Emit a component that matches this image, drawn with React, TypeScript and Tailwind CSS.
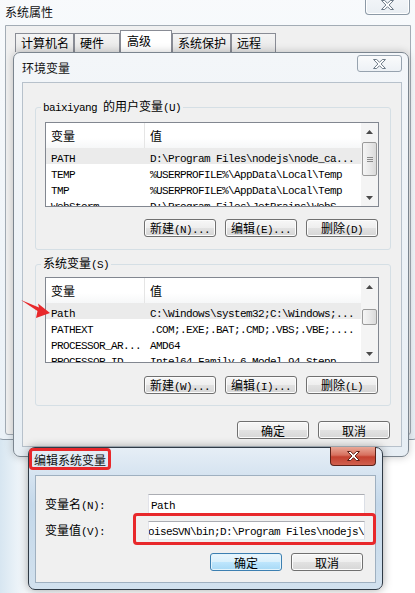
import React from "react";

const CJK = "font-['Noto_Sans_CJK_SC',sans-serif] text-[12px] leading-[16px]";

// SimSun-like mix: CJK runs 12px, ASCII runs monospace at 6px per char
function Mixed({ text }: { text: string }) {
  const parts = text.split(/([\u4e00-\u9fff]+)/).filter(Boolean);
  return (
    <span className="whitespace-pre leading-[16px] text-black">
      {parts.map((p, i) =>
        /[\u4e00-\u9fff]/.test(p) ? (
          <span key={i} className="font-['Noto_Sans_CJK_SC',sans-serif] text-[12px]">
            {p}
          </span>
        ) : (
          <span key={i} className="font-['Liberation_Mono',monospace] text-[11px] tracking-[-0.6px]">
            {p}
          </span>
        )
      )}
    </span>
  );
}

function Btn({ label, primary = false }: { label: string; primary?: boolean }) {
  return (
    <div
      className={
        primary
          ? "flex h-[18px] w-[72px] items-center justify-center overflow-hidden rounded-[3px] border border-[#3c7fb1] bg-[linear-gradient(#eaf6fd,#d9f0fc_50%,#bee6fd_50%,#a7d9f5)] shadow-[inset_0_0_0_1px_#e3f4fc]"
          : "flex h-[18px] w-[72px] items-center justify-center overflow-hidden rounded-[3px] border border-[#707070] bg-[linear-gradient(#f7f7f7,#eeeeee_50%,#e2e2e2_50%,#d6d6d6)] shadow-[inset_0_0_0_1px_#fcfcfc]"
      }
    >
      <Mixed text={label} />
    </div>
  );
}

function CloseX({ fill, stroke }: { fill: string; stroke: string }) {
  return (
    <svg width="13" height="10" viewBox="-0.5 -0.5 13 10">
      <path
        d="M0 0H3.2L6 2.8L8.8 0H12L7.6 4.5L12 9H8.8L6 6.2L3.2 9H0L4.4 4.5Z"
        fill={fill}
        stroke={stroke}
        strokeWidth="1"
        strokeLinejoin="round"
      />
    </svg>
  );
}

function GreyClose({ h }: { h: string }) {
  return (
    <div
      className={`flex ${h} w-[45px] items-end justify-center rounded-b-[4px] border border-t-0 border-[#8c99a6] bg-[linear-gradient(#f7f9fb,#e9eef3)] pb-[4px] shadow-[inset_0_0_0_1px_#ffffff]`}
    >
      <CloseX fill="#ffffff" stroke="#6f7c89" />
    </div>
  );
}

type Row = { name: string; value: string; sel?: boolean };

function Scrollbar({ thumb, grip }: { thumb: string; grip?: boolean }) {
  return (
    <div className="flex w-[17px] shrink-0 flex-col bg-[#f4f4f4]">
      <div className="flex h-[17px] shrink-0 items-center justify-center">
        <svg width="7" height="4" viewBox="0 0 7 4">
          <path d="M3.5 0L7 4H0Z" fill="#4a4a4a" />
        </svg>
      </div>
      <div className="flex-1 px-[1px]">
        <div
          className={`${thumb} flex flex-col items-center justify-center gap-[1px] rounded-[2px] border border-[#9a9a9a] bg-[linear-gradient(90deg,#f5f5f5,#e9e9e9_50%,#dadada)]`}
        >
          {grip && (
            <>
              <div className="h-px w-[6px] bg-[#8a8a8a]" />
              <div className="h-px w-[6px] bg-[#8a8a8a]" />
              <div className="h-px w-[6px] bg-[#8a8a8a]" />
            </>
          )}
        </div>
      </div>
      <div className="flex h-[17px] shrink-0 items-center justify-center">
        <svg width="7" height="4" viewBox="0 0 7 4">
          <path d="M0 0H7L3.5 4Z" fill="#4a4a4a" />
        </svg>
      </div>
    </div>
  );
}

function VarList({ rows, h, thumb, grip }: { rows: Row[]; h: string; thumb: string; grip?: boolean }) {
  return (
    <div className={`flex w-[334px] ${h} overflow-hidden border border-[#828790] bg-white`}>
      <div className="min-w-0 flex-1 overflow-hidden">
        <div className="flex h-[25px] bg-[linear-gradient(#ffffff,#ffffff_60%,#f6f7f8)]">
          <div className={`flex w-[99px] shrink-0 items-center border-r border-[#e5e5e5] pl-[5px] ${CJK}`}>变量</div>
          <div className={`flex items-center pl-[5px] ${CJK}`}>值</div>
        </div>
        {rows.map((r) => (
          <div
            key={r.name}
            className={`flex h-[16px] items-center overflow-hidden whitespace-nowrap ${r.sel ? "bg-[#ebebeb]" : ""}`}
          >
            <div className="w-[99px] shrink-0 pl-[5px]">
              <Mixed text={r.name} />
            </div>
            <div className="pl-[5px]">
              <Mixed text={r.value} />
            </div>
          </div>
        ))}
      </div>
      <Scrollbar thumb={thumb} grip={grip} />
    </div>
  );
}

function Group({ label, children, pad }: { label: string; children: React.ReactNode; pad: string }) {
  return (
    <div className={`relative w-[356px] rounded-[3px] border border-[#d5dfe5] pl-[9px] ${pad}`}>
      <div className="absolute left-[5px] top-[-10px] flex h-[16px] items-center bg-[#f0f0f0] px-[2px]">
        <Mixed text={label} />
      </div>
      {children}
    </div>
  );
}

const userRows: Row[] = [
  { name: "PATH", value: "D:\\Program Files\\nodejs\\node_ca...", sel: true },
  { name: "TEMP", value: "%USERPROFILE%\\AppData\\Local\\Temp" },
  { name: "TMP", value: "%USERPROFILE%\\AppData\\Local\\Temp" },
  { name: "WebStorm", value: "D:\\Program Files\\JetBrains\\WebS" },
];

const sysRows: Row[] = [
  { name: "Path", value: "C:\\Windows\\system32;C:\\Windows;...", sel: true },
  { name: "PATHEXT", value: ".COM;.EXE;.BAT;.CMD;.VBS;.VBE;...." },
  { name: "PROCESSOR_AR...", value: "AMD64" },
  { name: "PROCESSOR_ID", value: "Intel64 Family 6 Model 94 Stepp" },
];

const tabs = [
  { label: "计算机名", w: "w-[59px]", sel: false },
  { label: "硬件", w: "w-[46px]", sel: false },
  { label: "高级", w: "w-[52px]", sel: true },
  { label: "系统保护", w: "w-[59px]", sel: false },
  { label: "远程", w: "w-[45px]", sel: false },
];

export default function App() {
  return (
    <div className="relative h-[593px] w-[415px] overflow-hidden bg-[linear-gradient(90deg,#d7e6f1,#f4f8fb_6%,#ffffff_30%)]">
      {/* 系统属性 */}
      <div className="absolute left-[-4px] top-[-12px] h-[452px] w-[424px] rounded-b-[7px] border border-[#8f9ba7] bg-[linear-gradient(#f8fafc,#eaf1f7)]">
        <div className="flex h-[36px] items-start justify-between pl-[8px] pr-[9px]">
          <div className={`mt-[15px] text-[#111] ${CJK}`}>系统属性</div>
          <GreyClose h="h-[26px]" />
        </div>
        <div className="ml-[8px] h-[410px] w-[406px] rounded-b-[3px] border border-[#a3acb5] bg-[#f0f0f0]">
          <div className="flex items-end pl-[9px] pt-[4px]">
            {tabs.map((t) => (
              <div
                key={t.label}
                className={
                  t.sel
                    ? `${t.w} h-[22px] border border-b-0 border-[#898c95] bg-white pl-[6px] pt-[2px] ${CJK}`
                    : `${t.w} h-[19px] border border-b-0 border-[#898c95] bg-[linear-gradient(#f4f4f4,#e6e6e6)] pl-[5px] pt-[1px] ${CJK}`
                }
              >
                {t.label}
              </div>
            ))}
          </div>
        </div>
      </div>

      {/* 环境变量 */}
      <div className="absolute left-[13px] top-[52px] flex h-[405px] w-[396px] flex-col rounded-[7px] border border-[#7b858f] bg-[linear-gradient(#f3f6f9,#e7eef4)] shadow-[0_0_8px_rgba(0,0,0,0.22)]">
        <div className="flex h-[29px] shrink-0 items-start justify-between pl-[8px] pr-[6px]">
          <div className={`mt-[7px] text-[#111] ${CJK}`}>环境变量</div>
          <div className="mt-[2px]">
            <div className="flex h-[17px] w-[45px] items-center justify-center rounded-[3px] border border-[#97a3af] bg-[linear-gradient(#fafbfc,#edf1f5)]">
              <CloseX fill="#ffffff" stroke="#6f7c89" />
            </div>
          </div>
        </div>
        <div className="ml-[8px] h-[365px] w-[380px] border border-[#b7c1cb] bg-[#f0f0f0]">
          <div className="ml-[12px] mt-[24px]">
            <Group label="baixiyang 的用户变量(U)" pad="pt-[14px] pb-[12px]">
              <VarList rows={userRows} h="h-[85px]" thumb="mt-[2px] h-[34px]" grip />
              <div className="mt-[12px] flex w-[333px] justify-end gap-[9px]">
                <Btn label="新建(N)..." />
                <Btn label="编辑(E)..." />
                <Btn label="删除(D)" />
              </div>
            </Group>
            <div className="mt-[14px]">
              <Group label="系统变量(S)" pad="pt-[12px] pb-[11px]">
                <VarList rows={sysRows} h="h-[86px]" thumb="mt-[14px] h-[16px]" />
                <div className="mt-[13px] flex w-[333px] justify-end gap-[9px]">
                  <Btn label="新建(W)..." />
                  <Btn label="编辑(I)..." />
                  <Btn label="删除(L)" />
                </div>
              </Group>
            </div>
            <div className="mt-[15px] flex w-[356px] justify-end gap-[9px] pr-[1px]">
              <Btn label="确定" />
              <Btn label="取消" />
            </div>
          </div>
        </div>
      </div>

      {/* 编辑系统变量 */}
      <div className="absolute left-[28px] top-[447px] flex h-[143px] w-[355px] flex-col rounded-[7px] border border-[#2f3a46] bg-[linear-gradient(#e6eef6,#c4d8ea_40%,#d2e1ee)] shadow-[0_0_10px_rgba(0,0,0,0.35)]">
        <div className="flex h-[27px] shrink-0 items-start justify-between pl-[5px] pr-[6px]">
          <div className={`mt-[4px] text-[#111] ${CJK}`}>编辑系统变量</div>
          <div className="mt-[-1px] flex h-[19px] w-[46px] items-center justify-center rounded-b-[4px] border border-t-0 border-[#5b2219] bg-[linear-gradient(#e9a897,#d7705e_45%,#c4412f_55%,#d0614f)]">
            <CloseX fill="#ffffff" stroke="#5a1e16" />
          </div>
        </div>
        <div className="ml-[6px] h-[108px] w-[341px] border border-[#9fb0c0] bg-[#f0f0f0]">
          <div className="mt-[18px] flex h-[20px] items-center">
            <div className="flex h-[20px] w-[112px] items-center pl-[9px]">
              <Mixed text="变量名(N):" />
            </div>
            <div className="flex h-[20px] w-[217px] items-center overflow-hidden border border-[#abadb3] border-b-[#e3e9ef] border-l-[#e2e3ea] border-r-[#dbdfe6] bg-white pl-[2px]">
              <Mixed text="Path" />
            </div>
          </div>
          <div className="mt-[7px] flex h-[19px] items-center">
            <div className="flex h-[19px] w-[112px] items-center pl-[9px]">
              <Mixed text="变量值(V):" />
            </div>
            <div className="flex h-[19px] w-[217px] items-center justify-end overflow-hidden border border-[#abadb3] border-b-[#e3e9ef] border-l-[#e2e3ea] border-r-[#dbdfe6] bg-white">
              <Mixed text="rtoiseSVN\bin;D:\Program Files\nodejs\" />
            </div>
          </div>
          <div className="mt-[13px] flex justify-end gap-[9px] pr-[12px]">
            <Btn label="确定" primary />
            <Btn label="取消" />
          </div>
        </div>
      </div>

      {/* annotations */}
      <div className="absolute left-[29px] top-[448px] h-[22px] w-[82px] rounded-[4px] border-[3px] border-[#e8282b]" />
      <div className="absolute left-[133px] top-[513px] h-[32px] w-[243px] rounded-[4px] border-[3px] border-[#e8282b]" />
      <svg className="absolute left-[18px] top-[296px]" width="36" height="24" viewBox="0 0 36 24">
        <path d="M3 4L21 11.5L20 7.5L32 17L18 22L19.5 15Z" fill="#e8282b" />
      </svg>
    </div>
  );
}
